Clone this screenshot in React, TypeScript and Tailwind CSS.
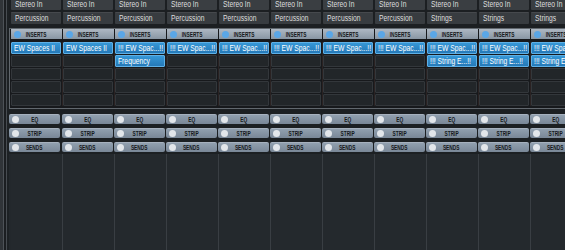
import React from "react";

type Ch = { input: string; name: string; slots: string[] };

const channels: Ch[] = [
  { input: "Stereo In", name: "Percussion", slots: ["EW Spaces II"] },
  { input: "Stereo In", name: "Percussion", slots: ["EW Spaces II"] },
  { input: "Stereo In", name: "Percussion", slots: ["!!! EW Spac...!!", "Frequency"] },
  { input: "Stereo In", name: "Percussion", slots: ["!!! EW Spac...!!"] },
  { input: "Stereo In", name: "Percussion", slots: ["!!! EW Spac...!!"] },
  { input: "Stereo In", name: "Percussion", slots: ["!!! EW Spac...!!"] },
  { input: "Stereo In", name: "Percussion", slots: ["!!! EW Spac...!!"] },
  { input: "Stereo In", name: "Percussion", slots: ["!!! EW Spac...!!"] },
  { input: "Stereo In", name: "Strings", slots: ["!!! EW Spac...!!", "!!! String E...!!"] },
  { input: "Stereo In", name: "Strings", slots: ["!!! EW Spac...!!", "!!! String E...!!"] },
  { input: "Stereo In", name: "Strings", slots: ["!!! EW Spac...!!", "!!! String E...!!"] },
];

const font = { fontFamily: '"Liberation Sans", Arial, sans-serif' };

function Label({ children }: { children: React.ReactNode }) {
  return (
    <span className="inline-block origin-left scale-x-[0.75] whitespace-nowrap text-[9px] leading-[9px]">
      {children}
    </span>
  );
}

function Caps({ children }: { children: React.ReactNode }) {
  return (
    <span className="inline-block scale-x-[0.74] whitespace-nowrap text-[6.5px] font-bold leading-[7px] text-[#15181b]">
      {children}
    </span>
  );
}

function Bar({ label }: { label: string }) {
  return (
    <div className="relative flex h-[10px] w-[51px] shrink-0 items-center rounded-[2px] border-t border-[#a6b1be] bg-gradient-to-b from-[#91a0af] to-[#798797]">
      <div className="ml-[3px] h-[7px] w-[7px] rounded-full bg-[#e2e6ea]" />
      <div className="absolute inset-0 flex items-center justify-center">
        <Caps>{label}</Caps>
      </div>
    </div>
  );
}

export default function App() {
  return (
    <div className="flex h-[250px] w-[565px] overflow-hidden bg-[#23282c]" style={font}>
      {/* left edge strip */}
      <div className="flex h-full w-[9px] shrink-0">
        <div className="w-[3px] bg-[#303438]" />
        <div className="w-[1px] bg-[#4d5257]" />
        <div className="w-[2px] bg-[#1b1e21]" />
        <div className="w-[1px] bg-[#474c51]" />
        <div className="w-[2px] bg-[#1d2124]" />
      </div>

      <div className="flex min-w-0 flex-1 flex-col">
        {/* top: input / name */}
        <div className="flex h-[28px] shrink-0 bg-[#1c1f22] pl-[2px]">
          {channels.map((c, i) => (
            <div key={i} className="flex w-[52px] shrink-0 flex-col gap-[2px]">
              <div className="flex h-[10px] w-[50px] items-end rounded-b-[1px] bg-[#3a3e42] pb-[1px] pl-[4px] text-[#dedede]">
                <Label>{c.input}</Label>
              </div>
              <div className="flex h-[12px] w-[50px] items-center rounded-[1px] border-t border-[#46494d] bg-[#383c40] pl-[4px] text-[#dedede]">
                <Label>{c.name}</Label>
              </div>
            </div>
          ))}
        </div>

        {/* inserts frame */}
        <div className="flex shrink-0 flex-col border-y border-l border-[#62686e] bg-[#17191c] pb-[2px]">
          <div className="flex h-[10px] pl-[1px]">
            {channels.map((c, i) => (
              <div key={i} className="flex w-[52px] shrink-0 pr-[1px]">
                <div className="relative flex h-[10px] w-[51px] items-center bg-gradient-to-b from-[#aeb8c3] to-[#8996a3]">
                  <div className="ml-[3px] h-[7px] w-[7px] rounded-full bg-[#5aa6e6]" />
                  <div className="absolute inset-0 flex items-center justify-center">
                    <Caps>INSERTS</Caps>
                  </div>
                </div>
              </div>
            ))}
          </div>
          <div className="mt-[3px] flex pl-[1px]">
            {channels.map((c, i) => (
              <div key={i} className="flex w-[52px] shrink-0 flex-col gap-[1px] border-r border-[#2a2222] pr-[1px]">
                {Array.from({ length: 5 }).map((_, k) =>
                  c.slots[k] ? (
                    <div
                      key={k}
                      className="flex h-[12px] w-[50px] items-center rounded-[1px] border border-[#5eb0e6] bg-gradient-to-b from-[#3697d6] to-[#2579b8] pl-[2px] text-white"
                    >
                      <Label>{c.slots[k]}</Label>
                    </div>
                  ) : (
                    <div
                      key={k}
                      className="h-[12px] w-[50px] rounded-[1px] border border-[#33373b] bg-[#222629]"
                    />
                  )
                )}
              </div>
            ))}
          </div>
        </div>

        {/* EQ / STRIP / SENDS */}
        <div className="flex shrink-0 flex-col gap-[4px] bg-[#1c2023] pb-[2px] pt-[5px]">
          {["EQ", "STRIP", "SENDS"].map((l) => (
            <div key={l} className="flex">
              {channels.map((c, i) => (
                <div key={i} className="flex w-[52px] shrink-0 pr-[1px] first:w-[53px]">
                  <Bar label={l} />
                </div>
              ))}
            </div>
          ))}
        </div>

        {/* empty lower area */}
        <div className="flex flex-1 pl-[2px]">
          {channels.map((c, i) => (
            <div key={i} className="w-[52px] shrink-0 border-r border-[#393e43] bg-[#24292d]" />
          ))}
        </div>
      </div>
    </div>
  );
}
